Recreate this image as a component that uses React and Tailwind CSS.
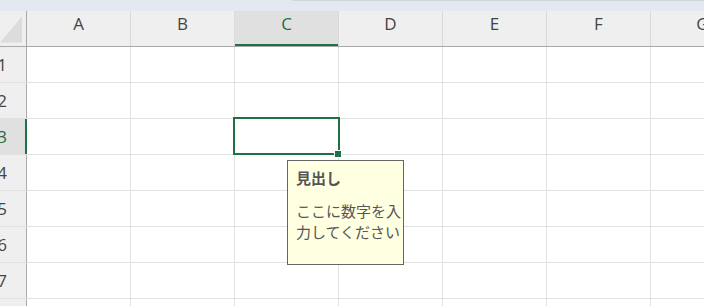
import React from "react";

const COLS = ["A", "B", "C", "D", "E", "F", "G"];
const ROWS = [1, 2, 3, 4, 5, 6, 7, 8];
const GREEN = "#1e7145";

const App = () => {
  return (
    <div className="relative w-[704px] h-[306px] overflow-hidden bg-white font-['Open_Sans','Noto_Sans_CJK_JP',sans-serif]">
      {/* top strip */}
      <div className="flex h-[11px] bg-[#e4e8f0]">
        <div className="w-[292px]" />
        <div className="flex-1 border-t border-[#d3d6dc]" />
      </div>

      {/* column headers */}
      <div className="flex h-[36px] bg-[#efefef] border-b border-[#a9a9a9]">
        <div className="w-[27px] shrink-0 border-r border-[#a9a9a9] flex items-end justify-end pb-[3px] pr-[4px]">
          <svg width="23" height="27" viewBox="0 0 23 27">
            <polygon points="23,0 23,27 0,27" fill="#dcdcdc" />
          </svg>
        </div>
        {COLS.map((c) =>
          c === "C" ? (
            <div
              key={c}
              className="w-[104px] shrink-0 border-r border-[#d8d8d8] bg-[#e0e0e0] flex items-center justify-center pb-[9px] text-[17px] text-[#1e7145] shadow-[inset_0_-2px_0_#1e7145]"
            >
              {c}
            </div>
          ) : (
            <div
              key={c}
              className="w-[104px] shrink-0 border-r border-[#dadada] flex items-center justify-center pb-[9px] text-[17px] text-[#444]"
            >
              {c}
            </div>
          )
        )}
      </div>

      {/* rows */}
      {ROWS.map((r) => (
        <div key={r} className="flex h-[36px] border-b border-[#e1e1e1]">
          {r === 3 ? (
            <div className="w-[27px] shrink-0 bg-[#e0e0e0] border-r-2 border-[#1e7145] flex items-center justify-end pr-[18px] text-[17px] text-[#1e7145]">
              {r}
            </div>
          ) : (
            <div className="w-[27px] shrink-0 bg-[#efefef] border-r border-[#a9a9a9] flex items-center justify-end pr-[19px] text-[17px] text-[#444]">
              {r}
            </div>
          )}
          {COLS.map((c) => (
            <div key={c} className="w-[104px] shrink-0 border-r border-[#e1e1e1]" />
          ))}
        </div>
      ))}

      {/* selected cell C3 */}
      <div className="absolute left-[233px] top-[117px] w-[107px] h-[38px] border-2 border-[#1e7145]" />
      <div className="absolute left-[335px] top-[151px] w-[6px] h-[6px] bg-[#1e7145] outline outline-1 outline-white" />

      {/* input message tooltip */}
      <div className="absolute left-[287px] top-[160px] w-[117px] h-[105px] bg-[#ffffe1] border border-[#666] pl-[8px] pt-[6px] font-['Noto_Sans_CJK_JP',sans-serif] text-[15px] text-[#555]">
        <div className="font-bold leading-[22px] mb-[11px]">見出し</div>
        <div className="leading-[21px] whitespace-nowrap">
          <div>ここに数字を入</div>
          <div>力してください</div>
        </div>
      </div>
    </div>
  );
};

export default App;
